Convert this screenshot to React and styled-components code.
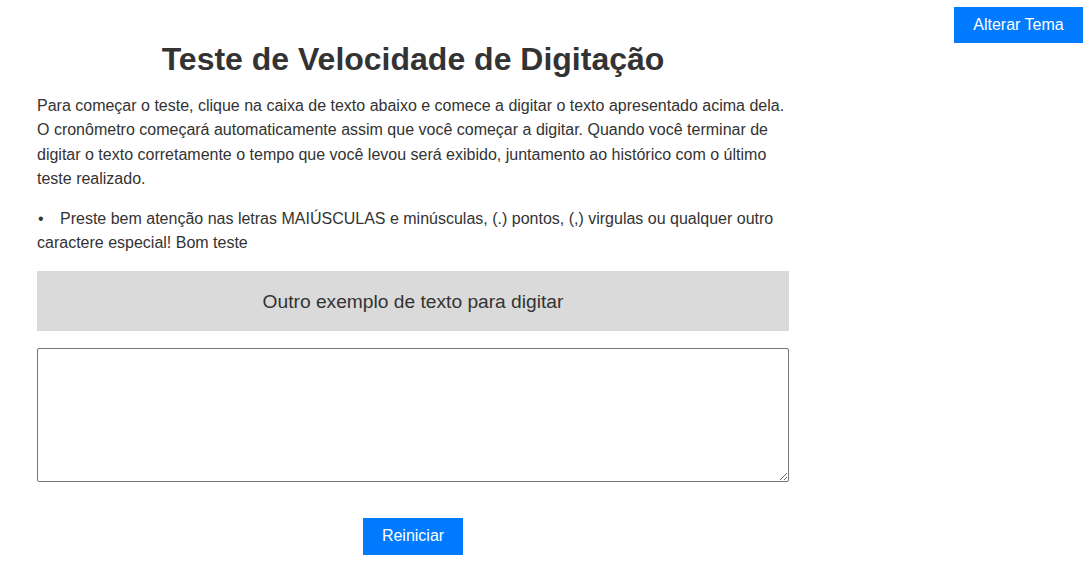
import styled, { createGlobalStyle } from 'styled-components';

const GlobalStyle = createGlobalStyle`
  body {
    margin: 0;
    background: #fff;
    font-family: 'Liberation Sans', Arial, sans-serif;
    color: #333;
  }
`;

const ThemeButton = styled.button`
  position: absolute;
  top: 7px;
  right: 6px;
  width: 129px;
  height: 36px;
  border: none;
  background-color: #007bff;
  color: #fff;
  font-family: inherit;
  font-size: 16px;
  cursor: pointer;
`;

const Main = styled.main`
  width: 752px;
  padding: 41px 0 40px 37px;
`;

const Title = styled.h1`
  margin: 0 0 16px;
  font-size: 32px;
  line-height: 37px;
  text-align: center;
  color: #333;
`;

const Text = styled.p`
  margin: 0 0 15px;
  font-size: 16px;
  line-height: 24.4px;
`;

const Tips = styled.ul`
  margin: 0 0 16px;
  padding: 0;
  list-style: none;
  font-size: 16px;
  line-height: 24px;
`;

const Tip = styled.li`
  &::before {
    content: '•';
    display: inline-block;
    width: 22px;
    padding-left: 1px;
  }
`;

const SampleBox = styled.div`
  height: 60px;
  box-sizing: border-box;
  padding-top: 3px;
  display: flex;
  align-items: center;
  justify-content: center;
  background-color: #dadada;
  font-size: 19.2px;
  color: #333;
  margin-bottom: 17px;
`;

const TypingArea = styled.textarea`
  display: block;
  box-sizing: border-box;
  width: 100%;
  height: 134px;
  margin: 0 0 36px;
  border: 1px solid #767676;
  border-radius: 2px;
  font-family: inherit;
  font-size: 16px;
`;

const Actions = styled.div`
  display: flex;
  justify-content: center;
`;

const ResetButton = styled.button`
  width: 100px;
  height: 37px;
  border: none;
  background-color: #007bff;
  color: #fff;
  font-family: inherit;
  font-size: 16px;
  cursor: pointer;
`;

const App = () => {
  return (
    <>
      <GlobalStyle />
      <ThemeButton>Alterar Tema</ThemeButton>
      <Main>
        <Title>Teste de Velocidade de Digitação</Title>
        <Text>
          Para começar o teste, clique na caixa de texto abaixo e comece a digitar o texto
          apresentado acima dela. O cronômetro começará automaticamente assim que você começar a
          digitar. Quando você terminar de digitar o texto corretamente o tempo que você levou será
          exibido, juntamento ao histórico com o último teste realizado.
        </Text>
        <Tips>
          <Tip>
            Preste bem atenção nas letras MAIÚSCULAS e minúsculas, (.) pontos, (,) virgulas ou
            qualquer outro caractere especial! Bom teste
          </Tip>
        </Tips>
        <SampleBox>Outro exemplo de texto para digitar</SampleBox>
        <TypingArea />
        <Actions>
          <ResetButton>Reiniciar</ResetButton>
        </Actions>
      </Main>
    </>
  );
};

export default App;
